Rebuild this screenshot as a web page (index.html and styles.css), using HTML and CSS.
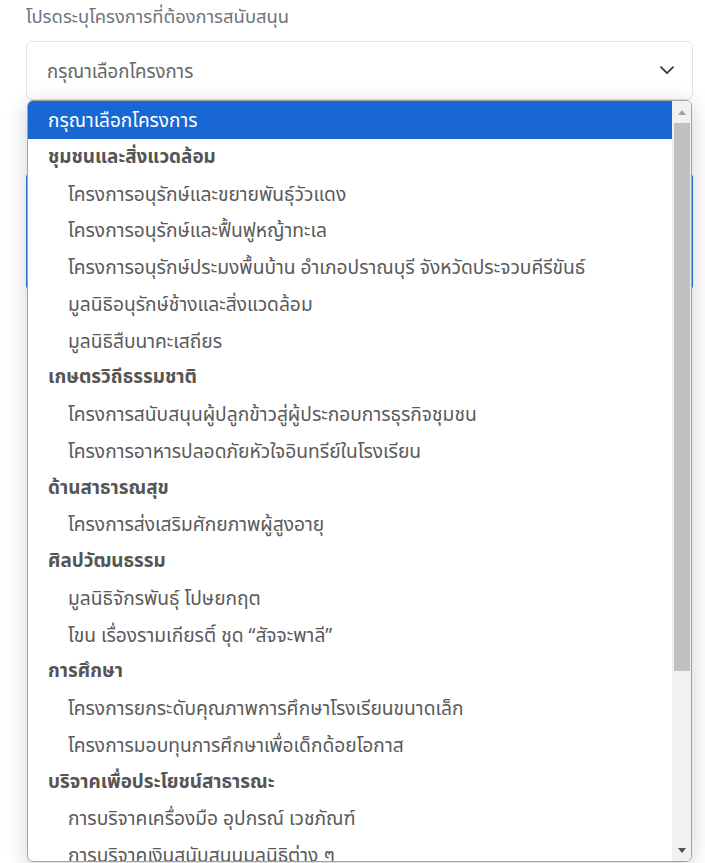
FILE: index.html
```html
<!DOCTYPE html>
<html lang="th">
<head>
<meta charset="utf-8">
<title>เลือกโครงการ</title>
<link rel="stylesheet" href="styles.css">
</head>
<body>
<div class="page">
  <label class="label">โปรดระบุโครงการที่ต้องการสนับสนุน</label>
  <div class="select">
    <span class="select-text">กรุณาเลือกโครงการ</span>
    <svg class="chevron" width="14" height="9" viewBox="0 0 14 9"><path d="M1 1.2 L7 7.2 L13 1.2" fill="none" stroke="#343a40" stroke-width="1.8" stroke-linecap="round" stroke-linejoin="round"/></svg>
  </div>
  <div class="behind"></div>
</div>

<div class="popup">
  <div class="list">
    <div class="opt selected">กรุณาเลือกโครงการ</div>
    <div class="opt group">ชุมชนและสิ่งแวดล้อม</div>
    <div class="opt item">โครงการอนุรักษ์และขยายพันธุ์วัวแดง</div>
    <div class="opt item">โครงการอนุรักษ์และฟื้นฟูหญ้าทะเล</div>
    <div class="opt item">โครงการอนุรักษ์ประมงพื้นบ้าน อำเภอปราณบุรี จังหวัดประจวบคีรีขันธ์</div>
    <div class="opt item">มูลนิธิอนุรักษ์ช้างและสิ่งแวดล้อม</div>
    <div class="opt item">มูลนิธิสืบนาคะเสถียร</div>
    <div class="opt group">เกษตรวิถีธรรมชาติ</div>
    <div class="opt item">โครงการสนับสนุนผู้ปลูกข้าวสู่ผู้ประกอบการธุรกิจชุมชน</div>
    <div class="opt item">โครงการอาหารปลอดภัยหัวใจอินทรีย์ในโรงเรียน</div>
    <div class="opt group">ด้านสาธารณสุข</div>
    <div class="opt item">โครงการส่งเสริมศักยภาพผู้สูงอายุ</div>
    <div class="opt group">ศิลปวัฒนธรรม</div>
    <div class="opt item">มูลนิธิจักรพันธุ์ โปษยกฤต</div>
    <div class="opt item">โขน เรื่องรามเกียรติ์ ชุด “สัจจะพาลี”</div>
    <div class="opt group">การศึกษา</div>
    <div class="opt item">โครงการยกระดับคุณภาพการศึกษาโรงเรียนขนาดเล็ก</div>
    <div class="opt item">โครงการมอบทุนการศึกษาเพื่อเด็กด้อยโอกาส</div>
    <div class="opt group">บริจาคเพื่อประโยชน์สาธารณะ</div>
    <div class="opt item">การบริจาคเครื่องมือ อุปกรณ์ เวชภัณฑ์</div>
    <div class="opt item">การบริจาคเงินสนับสนุนมูลนิธิต่าง ๆ</div>
  </div>
  <div class="scrollbar">
    <div class="sb-btn"><span class="tri-up"></span></div>
    <div class="sb-track"><div class="sb-thumb"></div></div>
    <div class="sb-btn"><span class="tri-down"></span></div>
  </div>
</div>
</body>
</html>
```

FILE: styles.css
```css
html, body {
  margin: 0;
  padding: 0;
  background: #ffffff;
}

body {
  font-family: "Noto Sans Thai", "Kanit", "Prompt", "Noto Sans", "DejaVu Sans", sans-serif;
  width: 705px;
  height: 863px;
  overflow: hidden;
  position: relative;
}

.page {
  padding: 4px 12px 0 26px;
  display: flex;
  flex-direction: column;
}

.label {
  font-size: 18.4px;
  line-height: 27px;
  color: #6c757d;
  margin-bottom: 10px;
}

.select {
  height: 57px;
  border: 1px solid #e3e3e3;
  border-radius: 6px;
  display: flex;
  align-items: center;
  justify-content: space-between;
  padding: 0 18px 0 20px;
  background: #fff;
}

.select-text {
  font-size: 18.6px;
  color: #666;
  padding-top: 3px;
}

.behind {
  margin-top: 73px;
  height: 115px;
  border: 1px solid #2a7bd4;
  border-radius: 4px;
}

.popup {
  position: absolute;
  left: 27px;
  top: 100px;
  width: 663px;
  height: 760px;
  border: 1px solid #a3a3a3;
  border-radius: 6px;
  overflow: hidden;
  background: #fff;
  box-shadow: 0 4px 22px rgba(0, 0, 0, 0.18);
  display: flex;
}

.list {
  flex: 1;
  overflow: hidden;
}

.opt {
  height: 36.75px;
  display: flex;
  align-items: center;
  font-size: 19.2px;
  color: #5a5a5a;
  white-space: nowrap;
  padding-top: 3px;
  box-sizing: border-box;
}

.selected {
  background: #1967d2;
  color: #fff;
  padding-left: 20px;
  height: 37.5px;
  font-size: 19px;
}

.group {
  padding-left: 20px;
  padding-top: 1px;
  font-size: 18.9px;
  font-weight: 700;
  color: #555;
}

.item {
  padding-left: 40px;
}

.scrollbar {
  width: 19px;
  background: #f1f1f1;
  display: flex;
  flex-direction: column;
}

.sb-btn {
  height: 22px;
  display: flex;
  align-items: center;
  justify-content: center;
}

.tri-up {
  width: 0;
  height: 0;
  border-left: 4.5px solid transparent;
  border-right: 4.5px solid transparent;
  border-bottom: 5px solid #a3a3a3;
}

.tri-down {
  width: 0;
  height: 0;
  border-left: 4.5px solid transparent;
  border-right: 4.5px solid transparent;
  border-top: 5px solid #505050;
}

.sb-track {
  flex: 1;
  padding: 0 1.5px;
}

.sb-thumb {
  height: 548px;
  background: #c1c1c1;
}
```
